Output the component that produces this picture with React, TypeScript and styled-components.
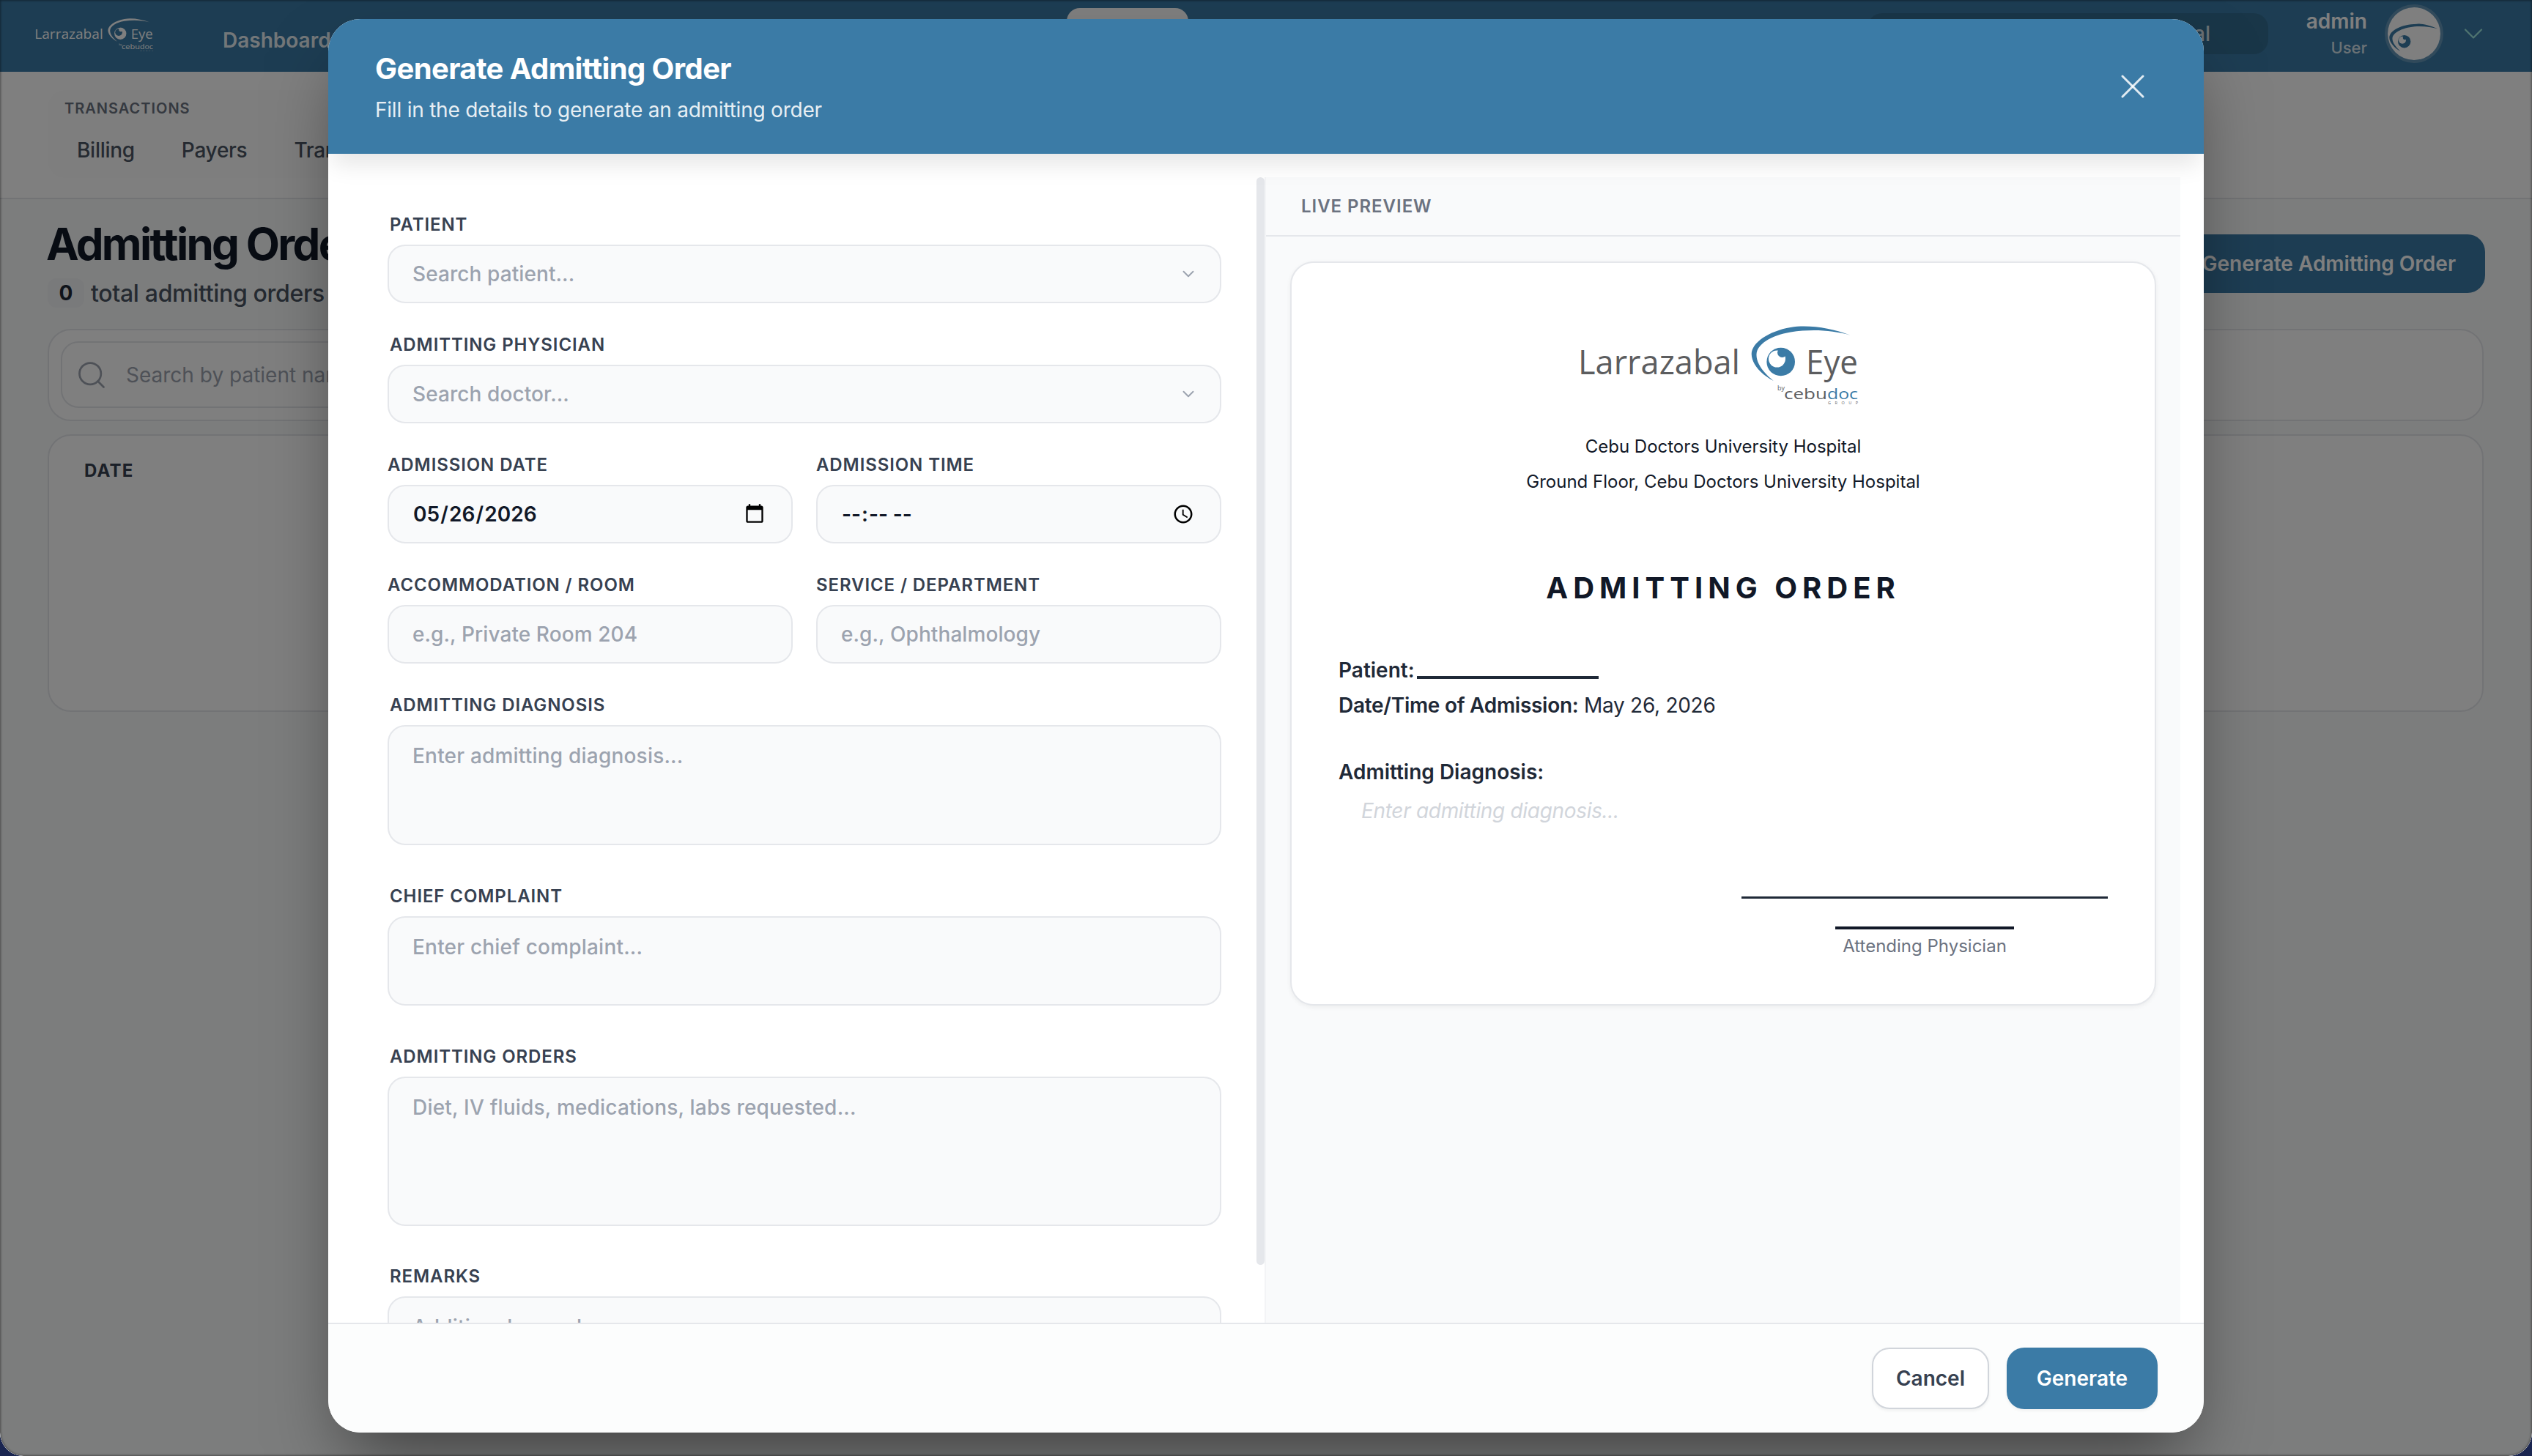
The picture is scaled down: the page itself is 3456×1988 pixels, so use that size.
import styled, { createGlobalStyle } from 'styled-components';
import { ChevronDown, Search, X } from 'lucide-react';

const FONT = `Inter, "Liberation Sans", sans-serif`;
const BRAND = '#3b7ba6';

const GlobalStyle = createGlobalStyle`
  * { box-sizing: border-box; }
  html, body { margin: 0; padding: 0; height: 100%; }
  body { background: #1a2550; font-family: ${FONT}; overflow: hidden; }
  #root { height: 100%; }
`;

const Window = styled.div`
  position: relative;
  height: 100vh;
  overflow: hidden;
  background: #fff;
  border-radius: 0 0 32px 32px;
`;

/* page behind the dialog */
const Nav = styled.header`
  height: 98px;
  background: ${BRAND};
  display: flex;
  align-items: center;
`;

const NavLogo = styled.div`
  margin-left: 46px;
  width: 170px;
  display: flex;
  margin-top: -2px;
`;

const NavLinks = styled.nav`
  margin-left: 88px;
  width: 1318px;
  display: flex;
  align-items: center;
  justify-content: space-between;
`;

const NavLink = styled.span`
  font-size: 28px;
  font-weight: 600;
  color: rgba(255, 255, 255, 0.9);
  margin-top: 12px;
`;

const ActiveTab = styled.span`
  width: 166px;
  height: 76px;
  border-radius: 18px;
  background: #fff;
`;

const QuickPill = styled.div`
  margin-left: 927px;
  width: 547px;
  flex: none;
  height: 56px;
  margin-top: -6px;
  border-radius: 20px;
  background: rgba(0, 0, 0, 0.12);
  display: flex;
  align-items: center;
  justify-content: flex-end;
  padding-right: 79px;
  font-size: 28px;
  font-weight: 500;
  color: rgba(255, 255, 255, 0.8);
`;

const UserBlock = styled.div`
  margin-left: auto;
  display: flex;
  align-items: center;
  margin-top: -6px;
`;

const UserText = styled.div`
  display: flex;
  flex-direction: column;
  align-items: flex-end;
  margin-right: 24px;
`;

const UserName = styled.span`
  font-size: 28px;
  line-height: 36px;
  font-weight: 600;
  color: #fff;
`;

const UserRole = styled.span`
  font-size: 22px;
  line-height: 32px;
  font-weight: 500;
  padding-top: 2px;
  color: rgba(255, 255, 255, 0.8);
`;

const Avatar = styled.div`
  width: 80px;
  height: 80px;
  border-radius: 50%;
  border: 4px solid rgba(255, 255, 255, 0.2);
  background: #fff;
  background-clip: padding-box;
  overflow: hidden;
  display: flex;
`;

const NavChevron = styled.span`
  display: flex;
  margin: 0 58px 0 19px;
  color: #9ee8e0;
`;

const SubNav = styled.div`
  height: 174px;
  background: #fff;
  border-bottom: 2px solid #e5e7eb;
  padding: 25px 0 0 65px;
`;

const SubCard = styled.div`
  width: 900px;
  height: 120px;
  border-radius: 24px;
  background: #fdfdfd;
  padding: 12px 0 0 23px;
`;

const SubTitle = styled.div`
  font-size: 20px;
  line-height: 26px;
  font-weight: 600;
  letter-spacing: 0.05em;
  color: #6b7280;
`;

const SubTabs = styled.div`
  display: flex;
  gap: 64px;
  padding: 26px 0 0 17px;
`;

const SubTab = styled.span`
  font-size: 28px;
  line-height: 36px;
  font-weight: 500;
  letter-spacing: -0.01em;
  color: #4b5563;
`;

const Main = styled.main`
  height: calc(100vh - 272px);
  background: #f9fafb;
  padding: 27px 66px 0 65px;
`;

const TitleRow = styled.div`
  display: flex;
  justify-content: space-between;
  align-items: flex-start;
  height: 150px;
`;

const PageTitle = styled.h1`
  margin: -2px 0 2px -2px;
  font-size: 60px;
  line-height: 72px;
  font-weight: 700;
  letter-spacing: -0.045em;
  color: #111827;
`;

const CountRow = styled.div`
  display: flex;
  align-items: center;
  gap: 9px;
  margin-top: 11px;
`;

const CountChip = styled.span`
  width: 50px;
  height: 40px;
  border-radius: 12px;
  background: #f3f4f6;
  display: flex;
  align-items: center;
  justify-content: center;
  font-size: 28px;
  font-weight: 700;
  color: #1f2937;
`;

const CountText = styled.span`
  font-size: 32px;
  font-weight: 500;
  letter-spacing: -0.01em;
  color: #4b5563;
`;

const NewButton = styled.button`
  margin: 21px -2px 0 0;
  height: 80px;
  width: 540px;
  border: 0;
  border-radius: 24px;
  background: ${BRAND};
  color: #fff;
  font-family: ${FONT};
  font-size: 28px;
  font-weight: 600;
  display: flex;
  align-items: center;
  justify-content: flex-end;
  padding-right: 40px;
`;

const SearchCard = styled.div`
  height: 126px;
  background: #fff;
  border: 2px solid #e5e7eb;
  border-radius: 32px;
  padding: 15px 16px;
`;

const SearchBox = styled.div`
  width: 1000px;
  height: 91px;
  border: 2px solid #e5e7eb;
  border-radius: 24px;
  display: flex;
  align-items: center;
  gap: 23px;
  padding-left: 18px;
  color: #9ca3af;
`;

const SearchInput = styled.input`
  flex: 1;
  border: 0;
  outline: 0;
  background: transparent;
  font-family: ${FONT};
  font-size: 28px;
  &::placeholder { color: #9ca3af; }
`;

const TableCard = styled.div`
  margin-top: 18px;
  height: 379px;
  background: #fff;
  border: 2px solid #e5e7eb;
  border-radius: 32px;
  padding: 32px 48px;
`;

const TableHead = styled.div`
  font-size: 24px;
  line-height: 32px;
  font-weight: 700;
  letter-spacing: 0.05em;
  color: #374151;
`;

/* dialog */
const Overlay = styled.div`
  position: absolute;
  inset: 0;
  background: rgba(0, 0, 0, 0.5);
  display: flex;
  align-items: center;
  justify-content: center;
  border-radius: 0 0 32px 32px;
  box-shadow: inset 0 0 3px 1px rgba(0, 0, 0, 0.4);
`;

const Modal = styled.div`
  width: 2560px;
  height: 1930px;
  margin-top: -6px;
  background: #fff;
  border-radius: 44px;
  overflow: hidden;
  display: flex;
  flex-direction: column;
  box-shadow: 0 50px 100px -24px rgba(0, 0, 0, 0.5);
`;

const ModalHeader = styled.div`
  position: relative;
  z-index: 2;
  height: 184px;
  flex: none;
  background: ${BRAND};
  padding: 45px 64px 0;
  display: flex;
  justify-content: space-between;
  align-items: flex-start;
  box-shadow: 0 20px 30px -6px rgba(0, 0, 0, 0.1);
`;

const ModalTitle = styled.h2`
  margin: 0;
  font-size: 40px;
  line-height: 46px;
  font-weight: 700;
  letter-spacing: -0.015em;
  color: #fff;
`;

const ModalSub = styled.p`
  margin: 16px 0 0;
  font-size: 28px;
  line-height: 34px;
  letter-spacing: -0.008em;
  color: rgba(255, 255, 255, 0.9);
`;

const CloseButton = styled.button`
  border: 0;
  background: transparent;
  padding: 0;
  margin: 19px 5px 0 0;
  display: flex;
  color: rgba(255, 255, 255, 0.85);
`;

const ModalBody = styled.div`
  flex: 1;
  min-height: 0;
  display: flex;
  padding: 32px 32px 0 0;
`;

const FormColumn = styled.div`
  position: relative;
  flex: 0 0 1278px;
  overflow: hidden;
  padding: 48px 59px 0 81px;
`;

const Scrollbar = styled.span`
  position: absolute;
  top: 0;
  right: 0;
  width: 11px;
  height: 1485px;
  border-radius: 6px;
  background: #e5e7eb;
`;

const Field = styled.div<{ $after?: number }>`
  margin-bottom: ${({ $after }) => $after ?? 40}px;
`;

const Label = styled.label<{ $inset?: boolean }>`
  display: block;
  padding: 1px 0 0 ${({ $inset }) => ($inset ? 3 : 0)}px;
  margin-bottom: 11px;
  font-size: 24px;
  line-height: 32px;
  font-weight: 600;
  letter-spacing: 0.9px;
  color: #374151;
`;

const Row = styled.div`
  display: grid;
  grid-template-columns: 1fr 1fr;
  column-gap: 32px;
`;

const Control = styled.input`
  display: block;
  width: 100%;
  height: 80px;
  padding: 0 32px;
  background: #f9fafb;
  border: 2px solid #e5e7eb;
  border-radius: 24px;
  outline: 0;
  font-family: ${FONT};
  font-size: 28px;
  font-weight: 500;
  letter-spacing: 0.003em;
  color: #111827;
  &::placeholder { color: #9ca3af; opacity: 1; }
  &[type='date'], &[type='time'] { font-weight: 600; }
  &[type='time'] { letter-spacing: 0.05em; }
  &::-webkit-calendar-picker-indicator {
    width: 30px;
    height: 30px;
    padding: 0;
    margin: 0 3px 0 0;
  }
`;

const Area = styled.textarea<{ $height: number }>`
  display: block;
  width: 100%;
  height: ${({ $height }) => $height}px;
  padding: 23px 32px;
  background: #f9fafb;
  border: 2px solid #e5e7eb;
  border-radius: 24px;
  outline: 0;
  resize: none;
  font-family: ${FONT};
  font-size: 28px;
  line-height: 34px;
  font-weight: 500;
  letter-spacing: 0.2px;
  color: #111827;
  &::placeholder { color: #9ca3af; opacity: 1; }
`;

const SelectWrap = styled.div`
  position: relative;
`;

const SelectChevron = styled.span`
  position: absolute;
  top: 27px;
  right: 32px;
  display: flex;
  color: #9ca3af;
`;

const PreviewColumn = styled.aside`
  flex: 1;
  min-width: 0;
  background: #f9fafb;
  border-left: 2px solid #f3f4f6;
`;

const PreviewHeader = styled.div`
  height: 81px;
  border-bottom: 2px solid #e5e7eb;
  padding-left: 48px;
  display: flex;
  align-items: center;
  font-size: 24px;
  font-weight: 600;
  letter-spacing: 0.04em;
  color: #6b7280;
`;

const Sheet = styled.div`
  margin: 34px 33px 0 33px;
  height: 1016px;
  background: #fff;
  border: 2px solid #e5e7eb;
  border-radius: 32px;
  box-shadow: 0 2px 6px rgba(0, 0, 0, 0.06);
  padding: 81px 64px 0;
`;

const SheetLogo = styled.div`
  display: flex;
  justify-content: center;
  align-items: flex-start;
  height: 146px;
`;

const SheetLine = styled.div`
  font-size: 24px;
  line-height: 48px;
  text-align: center;
  color: #111827;
`;

const SheetTitle = styled.h3`
  margin: 91px 0 0;
  font-size: 40px;
  line-height: 60px;
  font-weight: 700;
  letter-spacing: 7px;
  text-align: center;
  color: #111827;
`;

const SheetRow = styled.div<{ $top?: number; $tight?: boolean }>`
  margin-top: ${({ $top }) => $top ?? 0}px;
  font-size: 28px;
  line-height: 48px;
  letter-spacing: ${({ $tight }) => ($tight ? '-0.01em' : 'normal')};
  color: #1f2937;
`;

const Strong = styled.strong`
  font-weight: 600;
`;

const Blank = styled.span`
  display: inline-block;
  width: 248px;
  height: 30px;
  margin-left: 3px;
  border-bottom: 4px solid #1f2937;
  vertical-align: -2px;
`;

const Empty = styled.div`
  margin: 7px 0 0 31px;
  font-size: 28px;
  line-height: 44px;
  font-style: italic;
  letter-spacing: -0.32px;
  color: #d1d5db;
`;

const Signature = styled.div`
  width: 500px;
  margin: 95px 0 0 auto;
  border-top: 3px solid #1f2937;
  padding-top: 38px;
  display: flex;
  flex-direction: column;
  align-items: center;
`;

const SignatureName = styled.div`
  width: 244px;
  border-top: 4px solid #111827;
  padding-top: 7px;
  font-size: 24px;
  line-height: 32px;
  text-align: center;
  white-space: nowrap;
  color: #6b7280;
`;

const ModalFooter = styled.div`
  height: 150px;
  flex: none;
  border-top: 2px solid #e5e7eb;
  background: #fcfdfd;
  padding-right: 63px;
  display: flex;
  align-items: center;
  justify-content: flex-end;
  gap: 24px;
`;

const FooterButton = styled.button<{ $primary?: boolean }>`
  height: 84px;
  width: ${({ $primary }) => ($primary ? 206 : 160)}px;
  border-radius: 24px;
  border: ${({ $primary }) => ($primary ? '0' : '2px solid #d1d5db')};
  background: ${({ $primary }) => ($primary ? BRAND : '#fff')};
  color: ${({ $primary }) => ($primary ? '#fff' : '#374151')};
  font-family: ${FONT};
  font-size: 28px;
  font-weight: 600;
  box-shadow: 0 2px 4px rgba(0, 0, 0, 0.06);
`;

const LOGO_FONT = `"Open Sans", Lato, sans-serif`;

const LogoMark = ({ width, ink, accent, hole }: { width: number; ink: string; accent: string; hole: string }) => (
  <svg width={width} height={(width * 120) / 402} viewBox="2 0 402 120" fill="none">
    <text x="5" y="71" fontFamily={LOGO_FONT} fontWeight="400" fontSize="45" fill={ink} textLength="221" lengthAdjust="spacingAndGlyphs">
      Larrazabal
    </text>
    <text x="316" y="71" fontFamily={LOGO_FONT} fontWeight="400" fontSize="45" fill={ink} textLength="71" lengthAdjust="spacingAndGlyphs">
      Eye
    </text>
    <path
      d="M376.7 17.7C350 8 320 3 295 7C265 12 242 28 241.7 43.3C242 58 256 72 271.7 80C258 69 248 56 248.5 44C249 30 268 18 295 13.5C325 9 352 11 376.7 17.7Z"
      fill={accent}
    />
    <circle cx="281.7" cy="54" r="19.3" fill={accent} />
    <circle cx="276.5" cy="50" r="11.5" fill={hole} />
    <circle cx="283.5" cy="41.5" r="6.5" fill={accent} />
    <text x="277" y="93" fontFamily={LOGO_FONT} fontSize="9" fill={ink}>
      by
    </text>
    <text x="286" y="104.5" fontFamily={LOGO_FONT} fontSize="20" fill={ink} textLength="59" lengthAdjust="spacingAndGlyphs">
      cebu
    </text>
    <text x="345" y="104.5" fontFamily={LOGO_FONT} fontSize="20" fill={accent} textLength="42" lengthAdjust="spacingAndGlyphs">
      doc
    </text>
    <text x="346" y="111.5" fontFamily={LOGO_FONT} fontSize="5.5" fill={ink} textLength="41">
      GROUP
    </text>
  </svg>
);

const AvatarEye = () => (
  <svg width="72" height="72" viewBox="4 4 72 72">
    <path
      d="M72.3 33.3C60 28 50 26 44 26.7C22 27 6 36 6.3 45.7C6.5 52 14 60 21.3 64C15 58 10 52 10.5 46C11 38 26 31 44 30C55 29.6 64 31 72.3 33.3Z"
      fill={BRAND}
    />
    <circle cx="26.7" cy="50.7" r="8.7" fill={BRAND} />
    <circle cx="24" cy="48.7" r="5" fill="#fff" />
    <circle cx="27.6" cy="45.5" r="2.8" fill={BRAND} />
  </svg>
);

const PatientSelect = ({ label, placeholder }: { label: string; placeholder: string }) => (
  <Field>
    <Label $inset>{label}</Label>
    <SelectWrap>
      <Control placeholder={placeholder} readOnly />
      <SelectChevron>
        <ChevronDown size={26} strokeWidth={1.8} />
      </SelectChevron>
    </SelectWrap>
  </Field>
);

const TextField = ({ label, placeholder, height, after }: { label: string; placeholder: string; height: number; after: number }) => (
  <Field $after={after}>
    <Label $inset>{label}</Label>
    <Area $height={height} placeholder={placeholder} readOnly />
  </Field>
);

export default function App() {
  return (
    <Window>
      <GlobalStyle />
      <Nav>
        <NavLogo>
          <LogoMark width={170} ink="#ffffff" accent="#ffffff" hole={BRAND} />
        </NavLogo>
        <NavLinks>
          <NavLink>Dashboard</NavLink>
          <ActiveTab />
        </NavLinks>
        <QuickPill>Portal</QuickPill>
        <UserBlock>
          <UserText>
            <UserName>admin</UserName>
            <UserRole>User</UserRole>
          </UserText>
          <Avatar>
            <AvatarEye />
          </Avatar>
          <NavChevron>
            <ChevronDown size={44} strokeWidth={1.2} />
          </NavChevron>
        </UserBlock>
      </Nav>
      <SubNav>
        <SubCard>
          <SubTitle>TRANSACTIONS</SubTitle>
          <SubTabs>
            <SubTab>Billing</SubTab>
            <SubTab>Payers</SubTab>
            <SubTab>Transactions</SubTab>
          </SubTabs>
        </SubCard>
      </SubNav>
      <Main>
        <TitleRow>
          <div>
            <PageTitle>Admitting Orders</PageTitle>
            <CountRow>
              <CountChip>0</CountChip>
              <CountText>total admitting orders</CountText>
            </CountRow>
          </div>
          <NewButton>Generate Admitting Order</NewButton>
        </TitleRow>
        <SearchCard>
          <SearchBox>
            <Search size={44} strokeWidth={1.5} />
            <SearchInput placeholder="Search by patient name..." readOnly />
          </SearchBox>
        </SearchCard>
        <TableCard>
          <TableHead>DATE</TableHead>
        </TableCard>
      </Main>

      <Overlay>
        <Modal>
          <ModalHeader>
            <div>
              <ModalTitle>Generate Admitting Order</ModalTitle>
              <ModalSub>Fill in the details to generate an admitting order</ModalSub>
            </div>
            <CloseButton>
              <X size={56} strokeWidth={1.3} />
            </CloseButton>
          </ModalHeader>
          <ModalBody>
            <FormColumn>
              <Scrollbar />
              <PatientSelect label="PATIENT" placeholder="Search patient..." />
              <PatientSelect label="ADMITTING PHYSICIAN" placeholder="Search doctor..." />
              <Row>
                <Field>
                  <Label>ADMISSION DATE</Label>
                  <Control type="date" defaultValue="2026-05-26" />
                </Field>
                <Field>
                  <Label>ADMISSION TIME</Label>
                  <Control type="time" />
                </Field>
              </Row>
              <Row>
                <Field>
                  <Label>ACCOMMODATION / ROOM</Label>
                  <Control placeholder="e.g., Private Room 204" readOnly />
                </Field>
                <Field>
                  <Label>SERVICE / DEPARTMENT</Label>
                  <Control placeholder="e.g., Ophthalmology" readOnly />
                </Field>
              </Row>
              <TextField label="ADMITTING DIAGNOSIS" placeholder="Enter admitting diagnosis..." height={164} after={53} />
              <TextField label="CHIEF COMPLAINT" placeholder="Enter chief complaint..." height={122} after={53} />
              <TextField label="ADMITTING ORDERS" placeholder="Diet, IV fluids, medications, labs requested..." height={204} after={52} />
              <TextField label="REMARKS" placeholder="Additional remarks..." height={122} after={0} />
            </FormColumn>
            <PreviewColumn>
              <PreviewHeader>LIVE PREVIEW</PreviewHeader>
              <Sheet>
                <SheetLogo>
                  <LogoMark width={402} ink="#5c5d5f" accent={BRAND} hole="#fff" />
                </SheetLogo>
                <SheetLine>Cebu Doctors University Hospital</SheetLine>
                <SheetLine>Ground Floor, Cebu Doctors University Hospital</SheetLine>
                <SheetTitle>ADMITTING ORDER</SheetTitle>
                <SheetRow $top={58}>
                  <Strong>Patient:</Strong>
                  <Blank />
                </SheetRow>
                <SheetRow $tight>
                  <Strong>Date/Time of Admission:</Strong> May 26, 2026
                </SheetRow>
                <SheetRow $top={43}>
                  <Strong>Admitting Diagnosis:</Strong>
                </SheetRow>
                <Empty>Enter admitting diagnosis...</Empty>
                <Signature>
                  <SignatureName>Attending Physician</SignatureName>
                </Signature>
              </Sheet>
            </PreviewColumn>
          </ModalBody>
          <ModalFooter>
            <FooterButton>Cancel</FooterButton>
            <FooterButton $primary>Generate</FooterButton>
          </ModalFooter>
        </Modal>
      </Overlay>
    </Window>
  );
}
